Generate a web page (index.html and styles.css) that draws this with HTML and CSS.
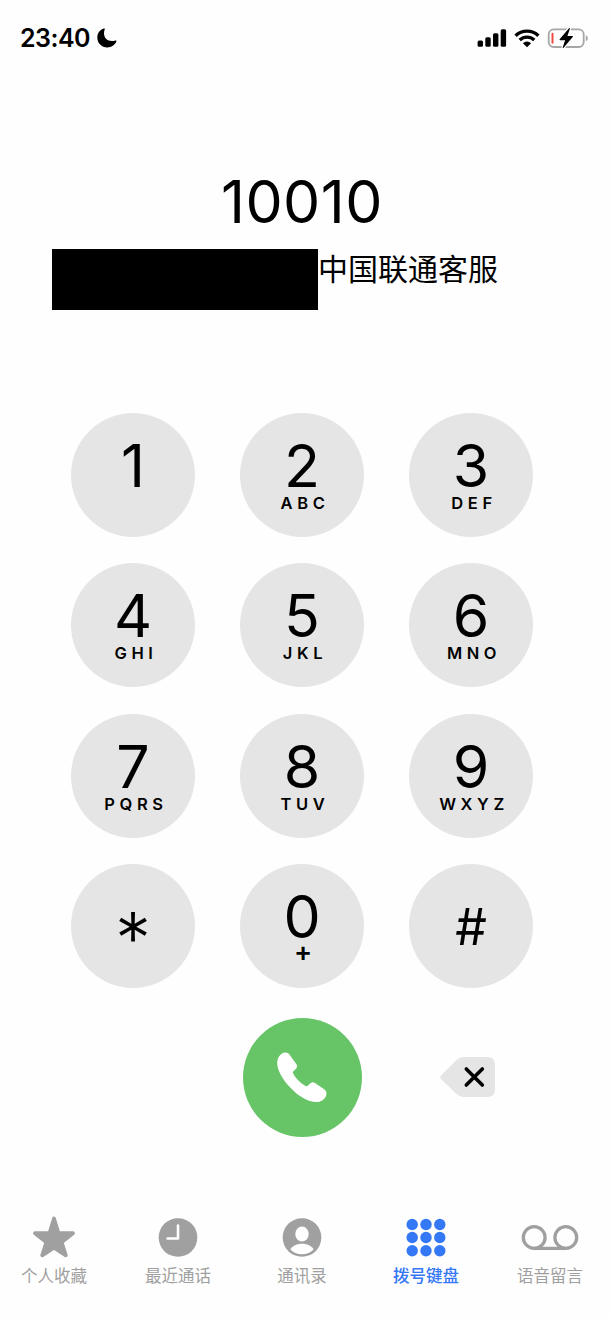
FILE: index.html
```html
<!DOCTYPE html>
<html lang="zh-CN">
<head>
    <meta charset="UTF-8">
    <meta name="viewport" content="width=device-width, initial-scale=1.0">
    <title>拨号键盘</title>
    <link rel="stylesheet" href="styles.css">
</head>
<body>
    <div class="phone">
        <header class="status-bar">
            <span class="time">23:40</span>
            <svg class="moon" width="20" height="20" viewBox="0 0 20 20">
                <path d="M6.800.5C3 1.700.3 5.100.3 9.400c0 5.600 4.400 10 10 10 4 0 7.400-2.300 9-5.700.4-1-.1-1.500-1-1.200-1.200.4-2.200.6-3.300.6-5 0-8-3.100-8-8 0-1.300.3-2.400.7-3.500.4-.8 0-1.400-.9-1.100z"/>
            </svg>
            <div class="status-icons">
                <svg width="30" height="20" viewBox="0 0 30 20">
                    <rect x="0.600" y="12.500" width="5.400" height="6.300" rx="1.500"/>
                    <rect x="8.300" y="9.300" width="5.400" height="9.500" rx="1.500"/>
                    <rect x="16" y="5.300" width="5.400" height="13.500" rx="1.500"/>
                    <rect x="23.700" y="1.300" width="5.400" height="17.500" rx="1.500"/>
                </svg>
                <svg width="26" height="20" viewBox="0 0 26 20">
                    <path d="M1.600 7.700a16.400 16.400 0 0 1 22.800 0M5.700 12a10.600 10.600 0 0 1 14.600 0" fill="none" stroke="#000" stroke-width="3.400"/>
                    <path d="M13 19.200l-4.100-4a5.900 5.900 0 0 1 8.200 0z"/>
                </svg>
                <svg width="42" height="22" viewBox="0 0 42 22">
                    <rect x="1.700" y="2.400" width="35" height="17.600" rx="5" fill="#fff" stroke="#a6a6a6" stroke-width="1.800"/>
                    <rect x="4.500" y="5.700" width="2" height="11" rx="1" fill="#ee4b40"/>
                    <path d="M38.800 8.200v6c2.700-1 2.700-5 0-6z" fill="#a6a6a6"/>
                    <path d="M22 1.200L12.800 12c-.5.600-.2 1.200.5 1.200h4.800L15.700 20.400c-.2.800.4 1 .9.400l9.100-10.700c.5-.6.200-1.200-.5-1.200h-4.800L22.900 1.700c.2-.8-.4-1-.9-.5z" stroke="#fff" stroke-width="2.400" paint-order="stroke"/>
                </svg>
            </div>
        </header>

        <main class="dialer">
            <div class="number">10010</div>
            <div class="contact">
                <div class="redacted"></div>
                <span class="contact-name">中国联通客服</span>
            </div>

            <div class="keypad">
                <button class="key"><span class="digit">1</span></button>
                <button class="key"><span class="digit">2</span><span class="letters">ABC</span></button>
                <button class="key"><span class="digit">3</span><span class="letters">DEF</span></button>
                <button class="key"><span class="digit">4</span><span class="letters">GHI</span></button>
                <button class="key"><span class="digit">5</span><span class="letters">JKL</span></button>
                <button class="key"><span class="digit">6</span><span class="letters">MNO</span></button>
                <button class="key"><span class="digit">7</span><span class="letters">PQRS</span></button>
                <button class="key"><span class="digit">8</span><span class="letters">TUV</span></button>
                <button class="key"><span class="digit">9</span><span class="letters">WXYZ</span></button>
                <button class="key"><span class="digit star">*</span></button>
                <button class="key"><span class="digit">0</span><span class="letters plus">+</span></button>
                <button class="key"><span class="digit hash">#</span></button>
            </div>

            <div class="actions">
                <button class="call" aria-label="呼叫">
                    <svg width="52" height="52" viewBox="0 0 52 52">
                        <path fill="#fff" d="M5 3.300C7.500 1.200 11.300.600 13.800 3.900L20.300 12.900C21.500 14.700 21.200 16.200 20 17.700L17.400 20.300C16.700 21 16.700 21.700 17.100 22.400C19.500 27 24 31.700 29.600 35C30.500 35.400 31 35.400 31.700 34.700L34.700 32.100C36 30.900 37.500 30.900 39 31.900L47.800 38C50.700 40 51 42.300 50 44.900C48.500 48.500 44.700 51 40.300 51C32 51 22.500 45.500 14.500 36.800C6.500 28.500 1.200 19 1.200 12.200C1.200 8.500 2.500 5.300 5 3.300Z"/>
                    </svg>
                </button>
                <button class="delete" aria-label="删除">
                    <svg width="56" height="40" viewBox="0 0 56 40">
                        <path fill="#e5e5e5" d="M1.200 18.200L16.500 3Q19.500 0 23.500 0H47.500Q55 0 55 7.500V32.500Q55 40 47.500 40H23.500Q19.500 40 16.500 37L1.200 22.200Q-.8 20.200 1.200 18.200Z"/>
                        <path d="M26.300 12L42.300 28M42.300 12L26.300 28" stroke="#000" stroke-width="3.600" stroke-linecap="round"/>
                    </svg>
                </button>
            </div>
        </main>

        <nav class="tab-bar">
            <a class="tab" href="#">
                <svg width="44" height="42" viewBox="0 0 44 42">
                    <path d="M22 2.500L26.400 17 41 17.200 29.600 26.200 33.800 39.300 22 31.600 10.200 39.300 14.400 26.200 3 17.200 17.600 17z" stroke="currentColor" stroke-width="3.800" stroke-linejoin="round"/>
                </svg>
                <span>个人收藏</span>
            </a>
            <a class="tab" href="#">
                <svg width="40" height="42" viewBox="0 0 40 42">
                    <circle cx="20" cy="21.500" r="19.300"/>
                    <path d="M20 9.500v13H9.600" fill="none" stroke="#fff" stroke-width="2.600" stroke-linecap="round" stroke-linejoin="round"/>
                </svg>
                <span>最近通话</span>
            </a>
            <a class="tab" href="#">
                <svg width="40" height="42" viewBox="0 0 40 42">
                    <circle cx="20" cy="21.500" r="19.300"/>
                    <ellipse cx="20" cy="18" rx="6.700" ry="7.400" fill="#fff"/>
                    <path d="M8.300 33.300c2.200-3.300 6.600-5.500 11.700-5.500s9.500 2.200 11.700 5.500c-3 3.200-7 5-11.700 5s-8.700-1.800-11.700-5z" fill="#fff"/>
                </svg>
                <span>通讯录</span>
            </a>
            <a class="tab active" href="#">
                <svg width="40" height="42" viewBox="0 0 40 42">
                    <circle cx="6.200" cy="8.500" r="5.700"/>
                    <circle cx="20" cy="8.500" r="5.700"/>
                    <circle cx="33.800" cy="8.500" r="5.700"/>
                    <circle cx="6.200" cy="21.500" r="5.700"/>
                    <circle cx="20" cy="21.500" r="5.700"/>
                    <circle cx="33.800" cy="21.500" r="5.700"/>
                    <circle cx="6.200" cy="34.700" r="5.700"/>
                    <circle cx="20" cy="34.700" r="5.700"/>
                    <circle cx="33.800" cy="34.700" r="5.700"/>
                </svg>
                <span>拨号键盘</span>
            </a>
            <a class="tab" href="#">
                <svg width="58" height="42" viewBox="0 0 58 42">
                    <g fill="none" stroke="currentColor" stroke-width="3.300">
                        <circle cx="13.200" cy="21.500" r="10.900"/>
                        <circle cx="44.800" cy="21.500" r="10.900"/>
                        <path d="M13.200 32.400h31.600"/>
                    </g>
                </svg>
                <span>语音留言</span>
            </a>
        </nav>
    </div>
</body>
</html>
```
FILE: styles.css
```css
body {
    margin: 0;
    background-color: #fefefe;
    color: #000;
    font-family: Inter, "Noto Sans CJK SC", sans-serif;
}
button {
    padding: 0;
    border: none;
    background: none;
    color: inherit;
    font-family: inherit;
    cursor: pointer;
}
svg {
    display: block;
}
.phone {
    width: 604px;
    height: 1318px;
    display: flex;
    flex-direction: column;
}

/* Status bar */
.status-bar {
    height: 76px;
    padding: 0 15px 0 20px;
    display: flex;
    align-items: center;
}
.time {
    font-size: 25px;
    font-weight: 600;
    letter-spacing: -0.5px;
}
.moon {
    margin-left: 7px;
}
.status-icons {
    margin-left: auto;
    display: flex;
    align-items: center;
    gap: 7px;
}

/* Dialed number */
.number {
    margin-top: 96px;
    height: 60px;
    line-height: 60px;
    font-size: 59px;
    letter-spacing: 0.5px;
    text-align: center;
}
.contact {
    margin: 17px 0 103px 52px;
    display: flex;
    align-items: flex-start;
}
.redacted {
    width: 266px;
    height: 61px;
    background-color: #000;
}
.contact-name {
    font-size: 30px;
    font-weight: 400;
    line-height: 40px;
}

/* Keypad */
.keypad {
    display: grid;
    grid-template-columns: repeat(3, 124px);
    justify-content: center;
    gap: 26.4px 45px;
}
.key {
    height: 124px;
    padding-top: 23px;
    border-radius: 50%;
    background-color: #e5e5e5;
    display: flex;
    flex-direction: column;
    align-items: center;
}
.digit {
    height: 58px;
    line-height: 59px;
    font-size: 59px;
}
.letters {
    line-height: 18px;
    font-size: 16.5px;
    font-weight: 600;
    letter-spacing: 4.6px;
    margin-right: -6px;
}
.plus {
    font-size: 27px;
    font-weight: 600;
    line-height: 14px;
    margin-right: -7px;
}
.star {
    font-size: 72px;
    font-weight: 300;
    line-height: 102px;
}
.hash {
    font-size: 50px;
    line-height: 81px;
}

/* Call and delete */
.actions {
    margin-top: 29.8px;
    display: grid;
    grid-template-columns: repeat(3, 124px);
    justify-content: center;
    justify-items: center;
    align-items: center;
    column-gap: 45px;
}
.call {
    grid-column: 2;
    width: 119px;
    height: 119px;
    border-radius: 50%;
    background-color: #67c568;
    display: flex;
    align-items: center;
    justify-content: center;
}
.delete {
    margin-right: 6px;
}

/* Tab bar */
.tab-bar {
    margin-top: 78.6px;
    padding: 0 9px;
    display: flex;
    gap: 34px;
}
.tab {
    width: 90px;
    flex-shrink: 0;
    display: flex;
    flex-direction: column;
    align-items: center;
    gap: 6px;
    color: #a0a0a0;
    fill: currentColor;
    font-size: 16.5px;
    font-weight: 400;
    line-height: 24px;
    text-decoration: none;
}
.tab.active {
    color: #3478f6;
    font-weight: 500;
}
```
